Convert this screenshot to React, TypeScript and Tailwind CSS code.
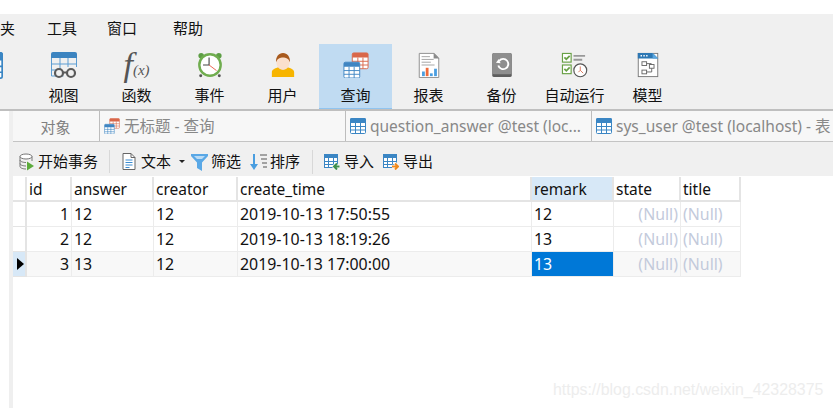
import type { ReactNode } from 'react'

const font = { fontFamily: '"Noto Sans", "Noto Sans CJK SC", sans-serif' }

function TableIcon({ size = 16, color = '#3b86c4' }: { size?: number; color?: string }) {
  return (
    <svg width={size} height={size} viewBox="0 0 16 16" className="shrink-0">
      <rect x="0.5" y="0.5" width="15" height="15" rx="1" fill="#fff" stroke={color} />
      <path d="M0 1.5a1.5 1.5 0 0 1 1.5-1.5h13a1.5 1.5 0 0 1 1.5 1.5V5H0z" fill={color} />
      <path d="M0 8.5h16M0 12h16M5.5 5v11M10.5 5v11" stroke={color} strokeWidth="1" />
    </svg>
  )
}

function ViewIcon() {
  return (
    <svg width="28" height="28" viewBox="0 0 28 28">
      <path d="M1 3a2 2 0 0 1 2-2h22a2 2 0 0 1 2 2v4H1z" fill="#3c84c0" />
      <path d="M1.5 7v18h12M26.5 7v9M1 13h26M1 19h10M10 7v12M18 7v9" fill="none" stroke="#5d9dd2" strokeWidth="1" />
      <circle cx="9" cy="22" r="4" fill="#f0f0f0" stroke="#5a5a5a" strokeWidth="2.2" />
      <circle cx="21" cy="22" r="4" fill="#f0f0f0" stroke="#5a5a5a" strokeWidth="2.2" />
      <path d="M13 21.5h4" stroke="#5a5a5a" strokeWidth="2" />
    </svg>
  )
}

function FxIcon() {
  return (
    <div className="flex h-[28px] w-[30px] items-end justify-center text-[#555] italic" style={{ fontFamily: '"Liberation Serif", serif' }}>
      <span className="text-[34px] leading-[28px]">f</span>
      <span className="mb-[1px] text-[15px] leading-[16px]">(x)</span>
    </div>
  )
}

function ClockIcon() {
  return (
    <svg width="26" height="26" viewBox="0 0 28 28">
      <circle cx="4.5" cy="4" r="3" fill="#5d9e45" />
      <circle cx="23.5" cy="4" r="3" fill="#5d9e45" />
      <circle cx="4" cy="25.5" r="1.6" fill="#555" />
      <circle cx="24" cy="25.5" r="1.6" fill="#555" />
      <circle cx="14" cy="14" r="11.5" fill="#fff" stroke="#70ad4f" strokeWidth="2.6" />
      <path d="M13 6v8H6.5" fill="none" stroke="#444" strokeWidth="1.2" />
      <path d="M13 14l8 6" stroke="#ea5a48" strokeWidth="1" />
    </svg>
  )
}

function UserIcon() {
  return (
    <svg width="26" height="26" viewBox="0 0 28 28">
      <path d="M2 27v-5c0-3 3-4 8-6h8c5 2 8 3 8 6v5z" fill="#f7b500" />
      <path d="M8 12c0 4 3 7 6 7s6-3 6-7z" fill="#dbd8d4" />
      <path d="M7 10c0-5 3-9 7-9s7 4 7 9v2c0 4-4 7-7 7s-7-3-7-7z" fill="#fbe0cd" />
      <path d="M6.5 11C6 5 9.500 1 14 1s8 4 7.500 10C20 7 17 6 14 6s-6 1-7.500 5z" fill="#a85a1e" />
    </svg>
  )
}

function QueryIcon({ small }: { small?: boolean }) {
  const s = small ? 16 : 26
  return (
    <svg width={s} height={s} viewBox="0 0 28 28" className="shrink-0">
      <rect x="10" y="1" width="17" height="17" rx="1.500" fill="#fff" stroke="#d9674a" />
      <path d="M10 2.500A1.500 1.500 0 0 1 11.500 1h14A1.500 1.500 0 0 1 27 2.500V6H10z" fill="#d9674a" />
      <path d="M10 10h17M10 14h17M16 6v12M21.500 6v12" stroke="#d9674a" />
      <rect x="1" y="11" width="17" height="17" rx="1.500" fill="#fff" stroke="#3f85c2" />
      <path d="M1 12.500A1.500 1.500 0 0 1 2.500 11h14A1.500 1.500 0 0 1 18 12.500V16H1z" fill="#3f85c2" />
      <path d="M1 20h17M1 24h17M6.500 16v12M12 16v12" stroke="#3f85c2" />
    </svg>
  )
}

function ReportIcon() {
  return (
    <svg width="26" height="26" viewBox="0 0 28 28">
      <path d="M3.500 1.500h16l5 5v21h-21z" fill="#fff" stroke="#8a8a8a" />
      <path d="M19 1l6 6h-6z" fill="#8a8a8a" />
      <path d="M6 5h9M6 8h13M6 11h10M6 14h14" stroke="#a0a0a0" />
      <rect x="6.500" y="21" width="3" height="5" fill="#4a9ee0" />
      <rect x="10.500" y="17" width="3" height="9" fill="#ef6a3a" />
      <rect x="15" y="23" width="3" height="3" fill="#4a9ee0" />
      <rect x="19.500" y="18" width="3" height="8" fill="#4a9ee0" />
    </svg>
  )
}

function BackupIcon() {
  return (
    <svg width="26" height="26" viewBox="0 0 26 28">
      <rect x="2.500" y="1" width="21" height="26" rx="2" fill="#5e5e5e" />
      <rect x="2.500" y="1" width="21" height="23" rx="2" fill="#8e8e8e" />
      <path d="M10 9.500a5.500 5.500 0 1 1-1 5" fill="none" stroke="#fff" strokeWidth="2" />
      <path d="M6.500 11.500l3-4 2 4.500z" fill="#fff" />
    </svg>
  )
}

function AutoRunIcon() {
  return (
    <svg width="27" height="26" viewBox="0 0 28 27">
      <rect x="1.500" y="1.500" width="9" height="9" fill="#fff" stroke="#68a045" strokeWidth="1.200" />
      <path d="M3.500 5.500l2 2 3.500-3.500" fill="none" stroke="#68a045" strokeWidth="1.800" />
      <rect x="1.500" y="13.500" width="9" height="9" fill="#fff" stroke="#68a045" strokeWidth="1.200" />
      <path d="M3.500 17.500l2 2 3.500-3.500" fill="none" stroke="#68a045" strokeWidth="1.800" />
      <path d="M13 4h12M13 8h9" stroke="#999" strokeWidth="2" />
      <circle cx="20" cy="19" r="6.700" fill="#fff" stroke="#555" strokeWidth="1.200" />
      <path d="M20 15v4l3 3M20 19l-2 2" fill="none" stroke="#d9674a" strokeWidth="0.900" />
    </svg>
  )
}

function ModelIcon() {
  return (
    <svg width="26" height="26" viewBox="0 0 28 28">
      <rect x="3.500" y="1.500" width="21" height="25" fill="#fff" stroke="#777" />
      <path d="M3 1h16l6 6H3z" fill="#2d78b4" />
      <path d="M19 1l6 6h-6z" fill="#5ba7e0" />
      <path d="M6 4h1.500M9 4h1.500M12 4h1.500" stroke="#fff" strokeWidth="1.500" />
      <rect x="7.500" y="10.500" width="5" height="4" fill="#fff" stroke="#666" />
      <rect x="15.500" y="13.500" width="5" height="4" fill="#fff" stroke="#666" />
      <rect x="7.500" y="19.500" width="5" height="4" fill="#fff" stroke="#666" />
      <path d="M12.500 12.500h5v1M18 17.500v4h-5.500" fill="none" stroke="#666" />
    </svg>
  )
}

function DbPlayIcon() {
  return (
    <svg width="16" height="18" viewBox="0 0 16 18">
      <ellipse cx="7" cy="3.500" rx="6" ry="2.500" fill="#fff" stroke="#777" />
      <path d="M1 3.500v10c0 1.500 3 2.500 6 2.500M13 3.500V8M1 7c0 1.500 3 2.500 6 2.500M1 10.500c0 1.500 3 2.500 6 2.500" fill="none" stroke="#777" />
      <path d="M8 8.500l7 4.500-7 4.500z" fill="#5cab3c" />
    </svg>
  )
}

function DocIcon() {
  return (
    <svg width="14" height="17" viewBox="0 0 14 17">
      <path d="M1 .500h8l4 4v12H1z" fill="#fff" stroke="#666" />
      <path d="M9 .500v4h4" fill="none" stroke="#666" />
      <path d="M3.500 7h7M3.500 9.500h7M3.500 12h7M3.500 14.500h4" stroke="#3b8bd0" />
    </svg>
  )
}

function FilterIcon() {
  return (
    <svg width="17" height="18" viewBox="0 0 17 18">
      <path d="M0 1h17v2l-6 6.500V18l-5-3V9.500L0 3z" fill="#5aa8e6" />
      <path d="M3 3h11l-3 3H6z" fill="#bcdcf5" />
    </svg>
  )
}

function SortIcon() {
  return (
    <svg width="17" height="18" viewBox="0 0 17 18">
      <path d="M4 1v11" stroke="#4a9ee0" strokeWidth="2" />
      <path d="M0 11h8l-4 6z" fill="#4a9ee0" />
      <path d="M10 2h7M11 6h6M12 10h5M13 14h4" stroke="#555" />
    </svg>
  )
}

function TransferIcon({ arrow, d }: { arrow: string; d: string }) {
  return (
    <svg width="16" height="16" viewBox="0 0 16 16">
      <rect x="0.500" y="0.500" width="13" height="13" fill="#fff" stroke="#3b86c4" />
      <path d="M0 0h14v4H0z" fill="#3b86c4" />
      <path d="M0 7.500h14M0 10.500h14M4.500 4v10M9.500 4v10" stroke="#3b86c4" />
      <path d={d} fill="none" stroke="#fff" strokeWidth="3.500" />
      <path d={d} fill="none" stroke={arrow} strokeWidth="2" />
    </svg>
  )
}

const ribbon: { label: string; icon: ReactNode; active?: boolean }[] = [
  { label: '视图', icon: <ViewIcon /> },
  { label: '函数', icon: <FxIcon /> },
  { label: '事件', icon: <ClockIcon /> },
  { label: '用户', icon: <UserIcon /> },
  { label: '查询', icon: <QueryIcon />, active: true },
  { label: '报表', icon: <ReportIcon /> },
  { label: '备份', icon: <BackupIcon /> },
  { label: '自动运行', icon: <AutoRunIcon /> },
  { label: '模型', icon: <ModelIcon /> },
]

const columns = 'grid grid-cols-[14px_45px_82px_84px_294px_82px_67px_60px] w-[728px]'

const rows = [
  { id: 1, answer: '12', creator: '12', time: '2019-10-13 17:50:55', remark: '12' },
  { id: 2, answer: '12', creator: '12', time: '2019-10-13 18:19:26', remark: '13' },
  { id: 3, answer: '13', creator: '12', time: '2019-10-13 17:00:00', remark: '13' },
]

function HeaderCell({ children, active }: { children?: ReactNode; active?: boolean }) {
  return (
    <div className={`flex h-[25px] items-center border-r-2 border-b-2 border-[#e4e4e4] pt-[2px] pl-[2px] text-[15.500px] text-[#111] ${active ? 'bg-[#d7e8f7]' : 'bg-white'}`}>
      {children}
    </div>
  )
}

function Cell({ children, right, odd, selected, nil }: { children?: ReactNode; right?: boolean; odd?: boolean; selected?: boolean; nil?: boolean }) {
  const bg = selected ? 'bg-[#0078d7] text-white' : odd ? 'bg-[#f8f8f8]' : 'bg-white'
  const color = nil ? 'text-[#c3cadb]' : selected ? '' : 'text-[#111]'
  return (
    <div className={`flex h-[25px] items-center border-r border-b border-[#ececec] px-[2px] pt-[2px] text-[15.900px] whitespace-nowrap ${right ? 'justify-end' : ''} ${bg} ${color}`}>
      {children}
    </div>
  )
}

function Tab({ label, icon, width }: { label: string; icon: ReactNode; width: string }) {
  return (
    <div className={`flex h-[30px] shrink-0 items-center gap-[4px] overflow-hidden pl-[4px] ${width}`}>
      {icon}
      <span className="pt-[2px] text-[15.500px] whitespace-nowrap text-[#888]">{label}</span>
    </div>
  )
}

function ToolButton({ icon, label, className }: { icon: ReactNode; label: string; className: string }) {
  return (
    <div className={`flex items-center ${className}`}>
      {icon}
      <span className="text-[15px] whitespace-nowrap text-[#111]">{label}</span>
    </div>
  )
}

export default function App() {
  return (
    <div className="relative h-[408px] w-[833px] overflow-hidden bg-white" style={font}>
      {/* Window title, cut off by the crop */}
      <div className="h-[14px] overflow-hidden">
        <div className="-mt-[15px] pl-[15px] text-[15.500px] leading-[18px] text-[#222]">Navicat Premium</div>
      </div>

      {/* Menu */}
      <div className="flex h-[30px] items-center bg-[#f0f0f0] pb-[2px] text-[15px] text-[#111]">
        <span className="w-[47px]">夹</span>
        <span className="w-[60px]">工具</span>
        <span className="w-[66px]">窗口</span>
        <span>帮助</span>
      </div>

      {/* Ribbon */}
      <div className="flex h-[67px] border-b-2 border-[#bfbfbf] bg-[#f0f0f0]">
        <div className="w-[27px] overflow-hidden pt-[8px]">
          <div className="-ml-[24px]"><TableIcon size={27} /></div>
        </div>
        {ribbon.map((item) => (
          <div key={item.label} className={`flex h-[65px] w-[73px] flex-col items-center pt-[7px] ${item.active ? 'border-b border-[#90c4f0] bg-[#c0dbf2]' : ''}`}>
            <div className="flex h-[28px] items-center justify-center">{item.icon}</div>
            <span className="mt-[6px] text-[15px] leading-[20px] whitespace-nowrap text-[#111]">{item.label}</span>
          </div>
        ))}
      </div>

      <div className="flex">
        {/* Left gutter */}
        <div className="ml-[9px] h-[298px] w-[4px] bg-[#efefef]" />

        <div className="min-w-0 flex-1">
          {/* Tabs */}
          <div className="flex h-[31px] border-b border-[#c4c4c4] bg-[#f7f7f7]">
            <div className="flex h-[30px] w-[87px] shrink-0 items-center justify-center border-r border-[#bdbdbd] pt-[2px] pr-[1px] text-[15px] text-[#808080]">对象</div>
            <Tab label="无标题 - 查询" icon={<QueryIcon small />} width="w-[246px] border-r border-[#bdbdbd]" />
            <Tab label="question_answer @test (loc..." icon={<TableIcon />} width="w-[246px] border-r border-[#bdbdbd]" />
            <Tab label="sys_user @test (localhost) - 表" icon={<TableIcon />} width="flex-1" />
          </div>

          {/* Table toolbar */}
          <div className="flex h-[34px] items-center bg-[#f0f0f0] pt-[5px]">
            <ToolButton icon={<DbPlayIcon />} label="开始事务" className="ml-[6px] w-[91px] gap-[3px] border-r border-[#d8d8d8]" />
            <ToolButton icon={<DocIcon />} label="文本" className="ml-[12px] gap-[5px]" />
            <div className="mr-[6px] ml-[8px] h-0 w-0 border-x-[3px] border-t-[3px] border-x-transparent border-t-[#222]" />
            <ToolButton icon={<FilterIcon />} label="筛选" className="gap-[3px]" />
            <ToolButton icon={<SortIcon />} label="排序" className="ml-[9px] gap-[3px]" />
            <div className="ml-[12px] h-[24px] w-px bg-[#d8d8d8]" />
            <ToolButton icon={<TransferIcon arrow="#3f8f4e" d="M15.500 12.500H10.500M13 9.500l-3 3 3 3" />} label="导入" className="ml-[11px] gap-[4px]" />
            <ToolButton icon={<TransferIcon arrow="#ee8a1e" d="M9 12.500h5.500M12 9.500l3 3-3 3" />} label="导出" className="ml-[9px] gap-[4px]" />
          </div>

          {/* Data grid */}
          <div className={`${columns} mt-px`}>
            <HeaderCell />
            <HeaderCell>id</HeaderCell>
            <HeaderCell>answer</HeaderCell>
            <HeaderCell>creator</HeaderCell>
            <HeaderCell>create_time</HeaderCell>
            <HeaderCell active>remark</HeaderCell>
            <HeaderCell>state</HeaderCell>
            <HeaderCell>title</HeaderCell>
            {rows.map((r, i) => {
              const odd = i === 2
              return (
                <div key={r.id} className="contents">
                  <div className={`flex h-[25px] items-center border-r-2 border-b border-[#e4e4e4] pl-[4px] ${odd ? 'bg-[#d7e8f7]' : 'bg-white'}`}>
                    {odd && <div className="h-0 w-0 border-y-[6px] border-l-[7px] border-y-transparent border-l-black" />}
                  </div>
                  <Cell right odd={odd}>{r.id}</Cell>
                  <Cell odd={odd}>{r.answer}</Cell>
                  <Cell odd={odd}>{r.creator}</Cell>
                  <Cell odd={odd}>{r.time}</Cell>
                  <Cell odd={odd} selected={odd}>{r.remark}</Cell>
                  <Cell right odd={odd} nil>(Null)</Cell>
                  <Cell odd={odd} nil>(Null)</Cell>
                </div>
              )
            })}
          </div>
        </div>
      </div>

      {/* CSDN watermark */}
      <div className="absolute top-[380px] left-[553px] text-[15.900px] leading-[20px] text-[#ededed]" style={{ fontFamily: '"Liberation Sans", sans-serif' }}>
        https://blog.csdn.net/weixin_42328375
      </div>
    </div>
  )
}
